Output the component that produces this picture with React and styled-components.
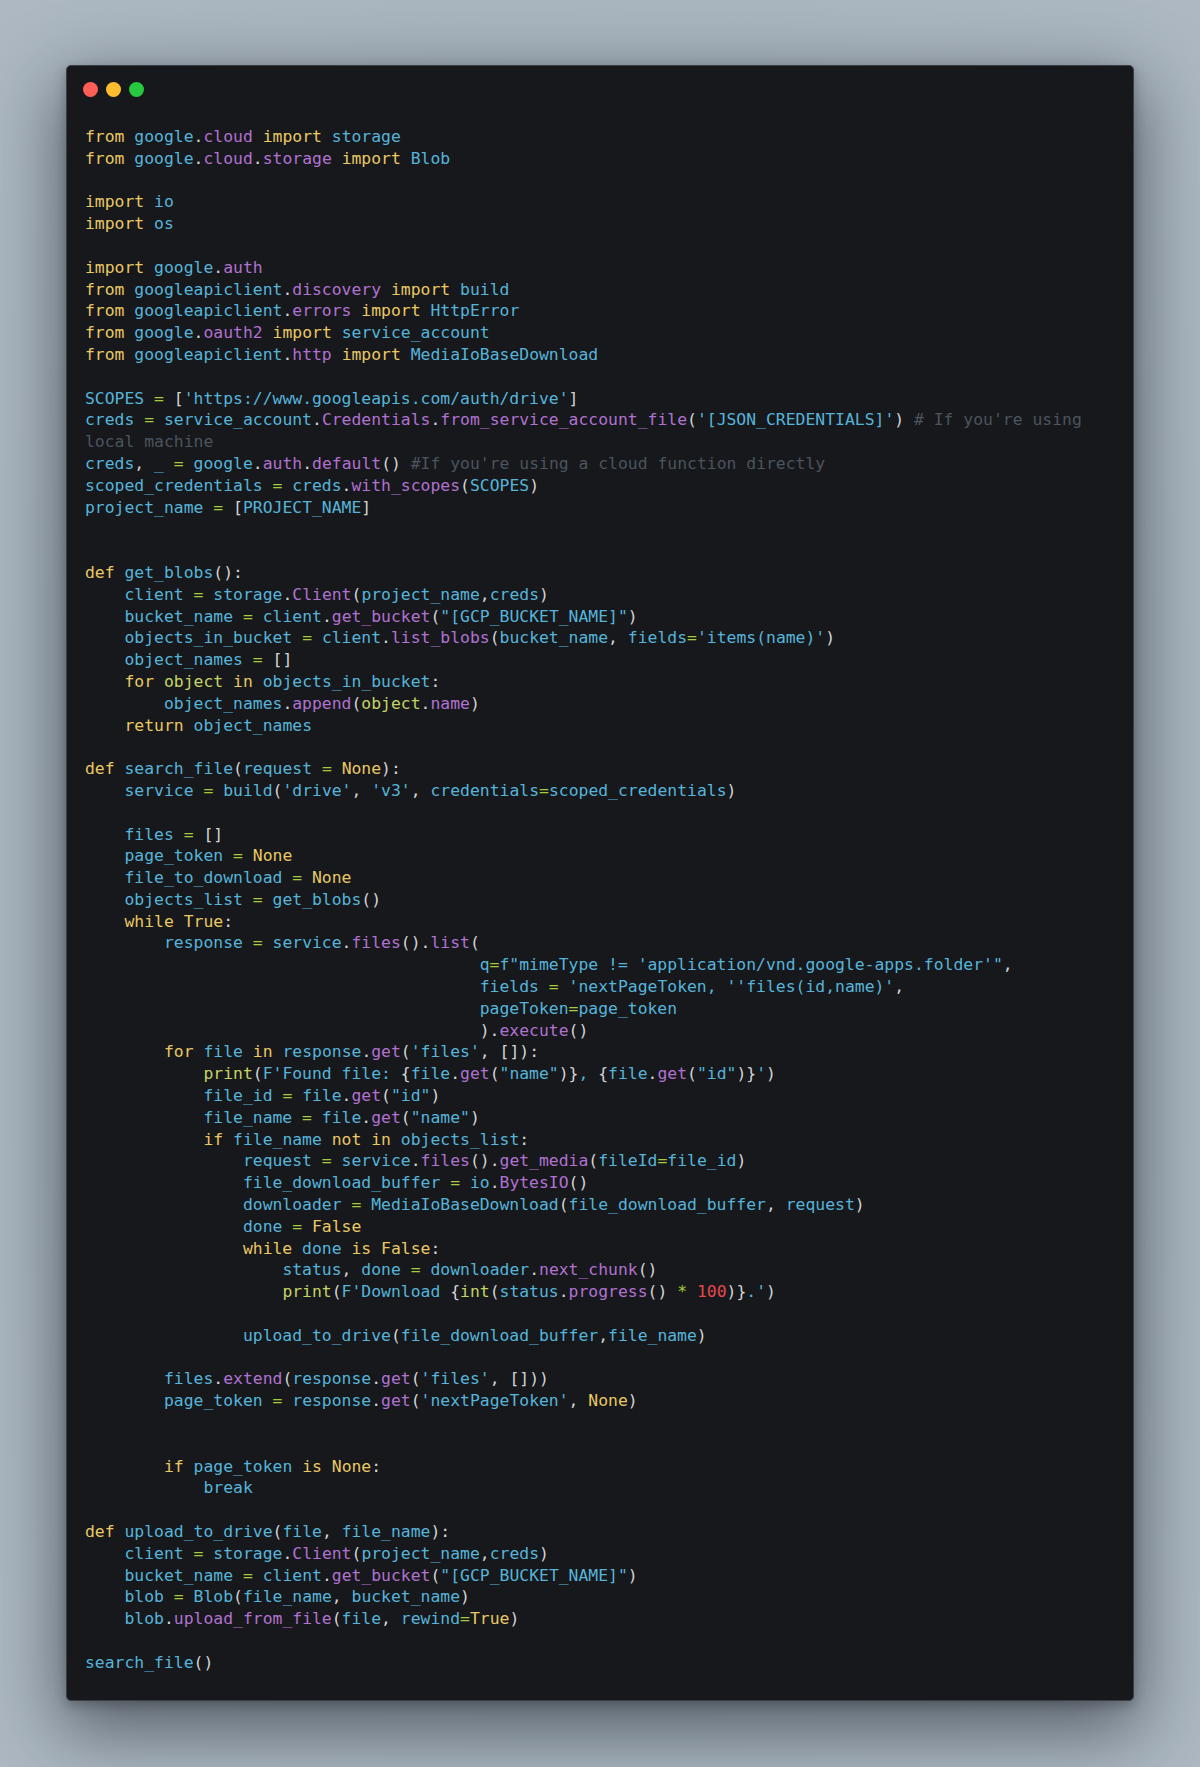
import React from "react";
import styled, { createGlobalStyle } from "styled-components";

const Global = createGlobalStyle`
  html, body { margin: 0; padding: 0; }
  body {
    background: #a8b3bd;
    font-family: "DejaVu Sans Mono", "Liberation Mono", monospace;
  }
`;

const Page = styled.div`
  min-height: 1767px;
  box-sizing: border-box;
  padding: 65px 66px 66px 66px;
  background: radial-gradient(ellipse at 50% 50%, #a3aeb9 0%, #a9b5bf 70%, #adb8c2 100%);
`;

const Window = styled.div`
  box-sizing: border-box;
  width: 1068px;
  background: #17181b;
  border: 1px solid #3b3f45;
  border-radius: 5px;
  padding: 16px 18px 26px 18px;
  box-shadow: 0 24px 70px 6px rgba(20, 26, 34, 0.55), 0 4px 12px rgba(0, 0, 0, 0.25);
`;

const Dots = styled.div`
  display: flex;
  gap: 8px;
  height: 15px;
  margin-left: -2px;
  margin-bottom: 29px;
`;

const Dot = styled.span`
  width: 15px;
  height: 15px;
  border-radius: 50%;
  background: ${(p) => p.$c};
`;

const Code = styled.pre`
  margin: 0;
  font-family: "DejaVu Sans Mono", "Liberation Mono", monospace;
  font-size: 16.4px;
  line-height: 21.8px;
  white-space: pre-wrap;
  word-break: normal;
  color: #d2d4d6;
`;

const Line = styled.div`
  min-height: 21.8px;
`;

const COLORS = {
  kw: "#e9c865",
  id: "#56b4da",
  str: "#56b4da",
  prop: "#b072d1",
  bi: "#c5d467",
  op: "#a6cb3e",
  punc: "#d2d4d6",
  num: "#e5484d",
  cm: "#4b545f",
  ws: "inherit",
};

const Tok = styled.span`
  color: ${(p) => COLORS[p.$k]};
`;

const KW = new Set(["from", "import", "def", "for", "in", "return", "while", "if", "not", "is", "None", "True", "False"]);
const BI = new Set(["print", "int", "object"]);

function tokenize(src) {
  const out = [];
  let i = 0;
  let prevSig = "";
  while (i < src.length) {
    const rest = src.slice(i);
    const c = src[i];
    let m;
    if (c === "#") {
      out.push(["cm", rest]);
      break;
    }
    if ((m = rest.match(/^([fF]?)(['"])/)) && (m[1] === "" || !/[A-Za-z0-9_]/.test(src[i - 1] || ""))) {
      const isF = m[1] !== "";
      const q = m[2];
      let j = i + m[0].length;
      let depth = 0;
      while (j < src.length) {
        if (isF && src[j] === "{") depth++;
        else if (isF && src[j] === "}") depth--;
        else if (src[j] === q && depth === 0) break;
        j++;
      }
      const full = src.slice(i, j + 1);
      if (isF && full.includes("{")) {
        let buf = "";
        let k = 0;
        while (k < full.length) {
          if (full[k] === "{") {
            if (buf) out.push(["str", buf]);
            buf = "";
            let d = 1;
            let e = k + 1;
            while (e < full.length && d > 0) {
              if (full[e] === "{") d++;
              else if (full[e] === "}") d--;
              if (d > 0) e++;
            }
            out.push(["punc", "{"]);
            tokenize(full.slice(k + 1, e)).forEach((t) => out.push(t));
            out.push(["punc", "}"]);
            k = e + 1;
          } else {
            buf += full[k];
            k++;
          }
        }
        if (buf) out.push(["str", buf]);
      } else {
        out.push(["str", full]);
      }
      i = j + 1;
      prevSig = q;
      continue;
    }
    if ((m = rest.match(/^[A-Za-z_][A-Za-z0-9_]*/))) {
      const w = m[0];
      let k = "id";
      if (prevSig === ".") k = "prop";
      else if (KW.has(w)) k = "kw";
      else if (BI.has(w)) k = "bi";
      out.push([k, w]);
      i += w.length;
      prevSig = w;
      continue;
    }
    if ((m = rest.match(/^\d+/))) {
      out.push(["num", m[0]]);
      i += m[0].length;
      prevSig = m[0];
      continue;
    }
    if ((m = rest.match(/^\s+/))) {
      out.push(["ws", m[0]]);
      i += m[0].length;
      continue;
    }
    if (/[=*+\-<>!]/.test(c)) {
      out.push(["op", c]);
      i++;
      prevSig = c;
      continue;
    }
    out.push(["punc", c]);
    i++;
    prevSig = c;
  }
  return out;
}

const SOURCE = `from google.cloud import storage
from google.cloud.storage import Blob

import io
import os

import google.auth
from googleapiclient.discovery import build
from googleapiclient.errors import HttpError
from google.oauth2 import service_account
from googleapiclient.http import MediaIoBaseDownload

SCOPES = ['https://www.googleapis.com/auth/drive']
creds = service_account.Credentials.from_service_account_file('[JSON_CREDENTIALS]') # If you're using local machine
creds, _ = google.auth.default() #If you're using a cloud function directly
scoped_credentials = creds.with_scopes(SCOPES)
project_name = [PROJECT_NAME]


def get_blobs():
    client = storage.Client(project_name,creds)
    bucket_name = client.get_bucket("[GCP_BUCKET_NAME]")
    objects_in_bucket = client.list_blobs(bucket_name, fields='items(name)')
    object_names = []
    for object in objects_in_bucket:
        object_names.append(object.name)
    return object_names

def search_file(request = None):
    service = build('drive', 'v3', credentials=scoped_credentials)

    files = []
    page_token = None
    file_to_download = None
    objects_list = get_blobs()
    while True:
        response = service.files().list(
                                        q=f"mimeType != 'application/vnd.google-apps.folder'",
                                        fields = 'nextPageToken, ''files(id,name)',
                                        pageToken=page_token
                                        ).execute()
        for file in response.get('files', []):
            print(F'Found file: {file.get("name")}, {file.get("id")}')
            file_id = file.get("id")
            file_name = file.get("name")
            if file_name not in objects_list:
                request = service.files().get_media(fileId=file_id)
                file_download_buffer = io.BytesIO()
                downloader = MediaIoBaseDownload(file_download_buffer, request)
                done = False
                while done is False:
                    status, done = downloader.next_chunk()
                    print(F'Download {int(status.progress() * 100)}.')

                upload_to_drive(file_download_buffer,file_name)

        files.extend(response.get('files', []))
        page_token = response.get('nextPageToken', None)


        if page_token is None:
            break

def upload_to_drive(file, file_name):
    client = storage.Client(project_name,creds)
    bucket_name = client.get_bucket("[GCP_BUCKET_NAME]")
    blob = Blob(file_name, bucket_name)
    blob.upload_from_file(file, rewind=True)

search_file()`;

const LINES = SOURCE.split("\n");

export default function App() {
  return (
    <>
      <Global />
      <Page>
        <Window>
          <Dots>
            <Dot $c="#fe5f57" />
            <Dot $c="#febc2e" />
            <Dot $c="#28c840" />
          </Dots>
          <Code>
            {LINES.map((ln, idx) => (
              <Line key={idx}>
                {ln === ""
                  ? " "
                  : tokenize(ln).map(([k, t], j) => (
                      <Tok key={j} $k={k}>
                        {t}
                      </Tok>
                    ))}
              </Line>
            ))}
          </Code>
        </Window>
      </Page>
    </>
  );
}
